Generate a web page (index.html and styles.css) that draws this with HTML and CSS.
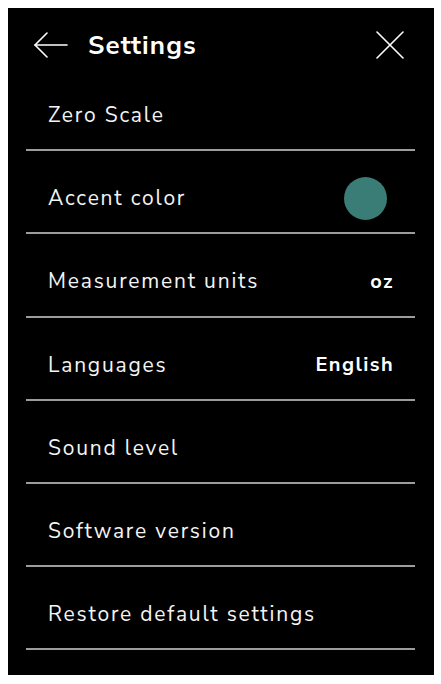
FILE: index.html
```html
<!DOCTYPE html>
<html lang="en">
<head>
<meta charset="utf-8">
<title>Settings</title>
<link rel="stylesheet" href="styles.css">
</head>
<body>
<div class="panel">
  <header class="header">
    <button class="icon-btn back" aria-label="Back">
      <svg width="34" height="26" viewBox="0 0 34 26" fill="none" stroke="#fff" stroke-width="1.6" stroke-linecap="round" stroke-linejoin="round">
        <path d="M1 13H33"/>
        <path d="M13 1L1 13L13 25"/>
      </svg>
    </button>
    <h1 class="title">Settings</h1>
    <button class="icon-btn close" aria-label="Close">
      <svg width="28" height="28" viewBox="0 0 28 28" fill="none" stroke="#fff" stroke-width="1.6" stroke-linecap="round">
        <path d="M1 1L27 27"/>
        <path d="M27 1L1 27"/>
      </svg>
    </button>
  </header>
  <ul class="list">
    <li class="row"><span class="label">Zero Scale</span></li>
    <li class="row"><span class="label">Accent color</span><span class="swatch"></span></li>
    <li class="row"><span class="label">Measurement units</span><span class="value">oz</span></li>
    <li class="row"><span class="label">Languages</span><span class="value">English</span></li>
    <li class="row"><span class="label">Sound level</span></li>
    <li class="row"><span class="label">Software version</span></li>
    <li class="row"><span class="label">Restore default settings</span></li>
  </ul>
</div>
</body>
</html>
```

FILE: styles.css
```css
html, body {
  margin: 0;
  padding: 0;
  background: #ffffff;
}

body {
  padding: 8px;
  font-family: "Nunito Sans", Lato, "Open Sans", sans-serif;
  color: #f4f4f4;
}

.panel {
  width: 426px;
  height: 667px;
  background: #000000;
  box-sizing: border-box;
  padding: 0 19px 0 18px;
}

.header {
  display: flex;
  align-items: center;
  height: 46px;
  padding: 14px 0 0 0;
}

.icon-btn {
  background: none;
  border: 0;
  padding: 0;
  display: flex;
  align-items: center;
  justify-content: center;
  cursor: pointer;
}

.back {
  margin-left: 8px;
}

.title {
  margin: 0 0 0 20px;
  font-size: 26px;
  font-weight: 700;
  letter-spacing: 1.1px;
  color: #ffffff;
  flex: 1;
}

.close {
  margin-right: 11px;
}

.list {
  list-style: none;
  margin: 0;
  padding: 0;
}

.row {
  display: flex;
  align-items: center;
  justify-content: space-between;
  padding: 13px 21px 0 22px;
  box-sizing: content-box;
  height: 68.2px;
  border-bottom: 2px solid #9c9c9c;
}

.label {
  font-size: 21px;
  letter-spacing: 1.8px;
}

.value {
  font-size: 20px;
  font-weight: 700;
  letter-spacing: 1.4px;
  color: #ffffff;
}

.swatch {
  width: 43px;
  height: 43px;
  border-radius: 50%;
  background: #3a7c76;
  margin-right: 7px;
}
```
